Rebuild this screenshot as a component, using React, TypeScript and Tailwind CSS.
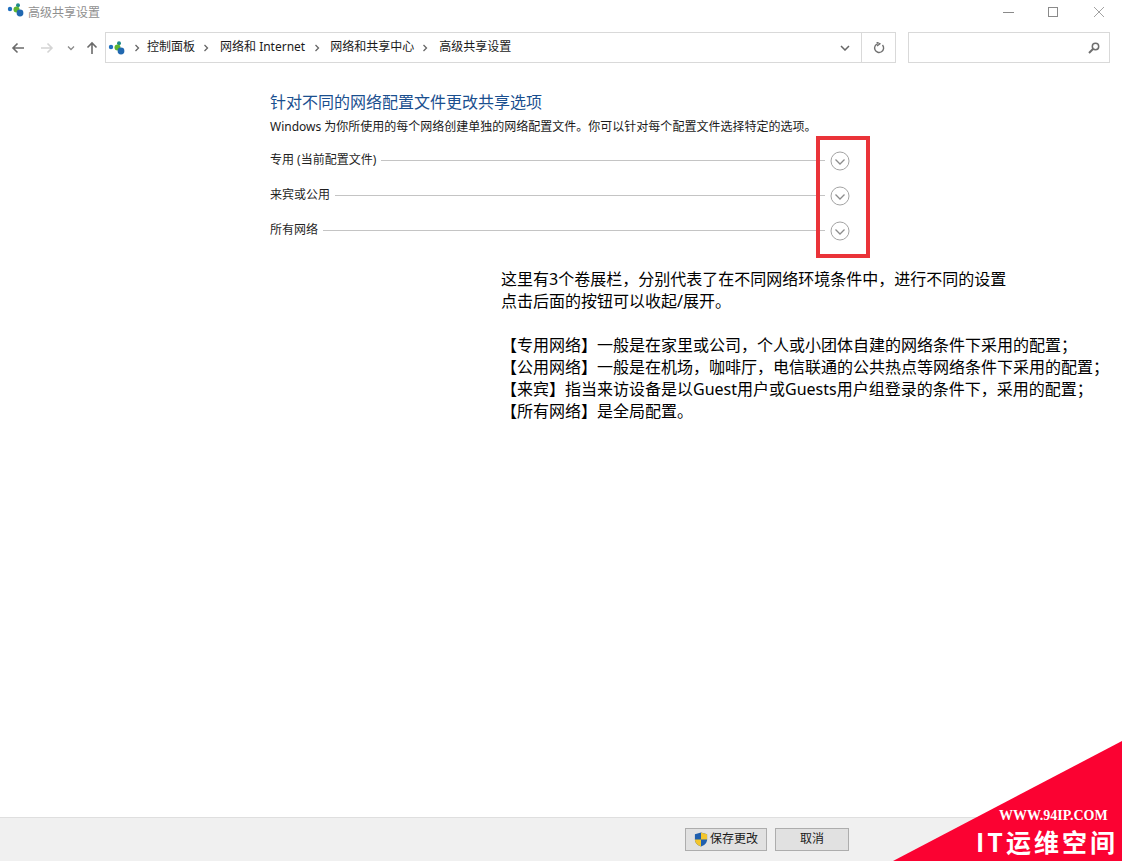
const FONT = "font-['Noto_Sans','Noto_Sans_CJK_SC',sans-serif]";

function NetworkIcon({ className }: { className: string }) {
    return (
        <svg viewBox="0 0 17 14" className={className}>
            <circle cx="3" cy="6" r="2.2" fill="#1f6fc0" />
            <circle cx="11" cy="2.2" r="2" fill="#1f8a8a" />
            <circle cx="9.5" cy="6.5" r="3" fill="#5cb531" />
            <circle cx="13" cy="10" r="3.4" fill="#2168b0" />
        </svg>
    );
}

function Crumb({ children }: { children: React.ReactNode }) {
    return <span className="block -translate-y-px whitespace-nowrap text-[12px] text-[#1a1a1a]">{children}</span>;
}

function Sep() {
    return (
        <svg viewBox="0 0 6 8" className="h-2 w-1.5 shrink-0">
            <path d="M1.5 1 L4.5 4 L1.5 7" fill="none" stroke="#666" strokeWidth="1.3" />
        </svg>
    );
}

function CircleChevron() {
    return (
        <svg viewBox="0 0 20 20" className="h-5 w-5 shrink-0">
            <circle cx="10" cy="10" r="9" fill="#fff" stroke="#a3a3a3" strokeWidth="1" />
            <path d="M5.5 8.5 L10 13 L14.5 8.5" fill="none" stroke="#8c8c8c" strokeWidth="1.3" />
        </svg>
    );
}

function Group({ label }: { label: string }) {
    return (
        <div className="flex h-[35px] items-center">
            <span className="block -translate-y-px whitespace-nowrap text-[12px] text-[#1f1f1f]">{label}</span>
            <div className="ml-[5px] h-px flex-1 bg-[#c4c4c4]" />
            <div className="ml-[5px]">
                <CircleChevron />
            </div>
        </div>
    );
}

const notes = [
    "这里有3个卷展栏，分别代表了在不同网络环境条件中，进行不同的设置",
    "点击后面的按钮可以收起/展开。",
    "",
    "【专用网络】一般是在家里或公司，个人或小团体自建的网络条件下采用的配置；",
    "【公用网络】一般是在机场，咖啡厅，电信联通的公共热点等网络条件下采用的配置；",
    "【来宾】指当来访设备是以Guest用户或Guests用户组登录的条件下，采用的配置；",
    "【所有网络】是全局配置。",
];

export default function App() {
    return (
        <div className={`relative flex h-[861px] w-[1122px] flex-col overflow-hidden bg-white ${FONT}`}>
            {/* title bar */}
            <div className="flex h-[24px] items-center pl-[7px]">
                <NetworkIcon className="h-[14px] w-[17px] -translate-y-[2px]" />
                <span className="ml-[4px] block translate-y-px text-[12px] text-[#8f8f8f]">高级共享设置</span>
                <div className="ml-auto flex items-center pr-[18px]">
                    <div className="h-px w-[11px] bg-[#8a8a8a]" />
                    <div className="ml-[34px] h-[10px] w-[10px] border border-[#8a8a8a]" />
                    <svg viewBox="0 0 10 10" className="ml-[36px] h-[10px] w-[10px]">
                        <path d="M0 0 L10 10 M10 0 L0 10" stroke="#8a8a8a" strokeWidth="0.8" />
                    </svg>
                </div>
            </div>

            {/* nav bar */}
            <div className="mt-[8px] flex h-[31px] items-center pl-[11px] pr-[12px]">
                <svg viewBox="0 0 14 12" className="h-[12px] w-[14px]">
                    <path d="M13 6 H2 M6.5 1.5 L2 6 L6.5 10.5" fill="none" stroke="#6b6b6b" strokeWidth="1.6" />
                </svg>
                <svg viewBox="0 0 14 12" className="ml-[15px] h-[12px] w-[14px]">
                    <path d="M1 6 H12 M7.5 1.5 L12 6 L7.5 10.5" fill="none" stroke="#d4d4d4" strokeWidth="1.6" />
                </svg>
                <svg viewBox="0 0 8 6" className="ml-[13px] h-[6px] w-[8px]">
                    <path d="M1 1.5 L4 4.5 L7 1.5" fill="none" stroke="#8a8a8a" strokeWidth="1.3" />
                </svg>
                <svg viewBox="0 0 12 14" className="ml-[11px] h-[14px] w-[12px]">
                    <path d="M6 13 V2 M1.5 6.5 L6 2 L10.5 6.5" fill="none" stroke="#6b6b6b" strokeWidth="1.6" />
                </svg>
                <div className="ml-[7px] flex h-[31px] w-[791px] shrink-0 items-center border border-[#d9d9d9] pl-[2px]">
                    <NetworkIcon className="h-[14px] w-[17px]" />
                    <div className="ml-[9px]"><Sep /></div>
                    <div className="ml-[7px]"><Crumb>控制面板</Crumb></div>
                    <div className="ml-[8px]"><Sep /></div>
                    <div className="ml-[11px]"><Crumb>网络和 Internet</Crumb></div>
                    <div className="ml-[9px]"><Sep /></div>
                    <div className="ml-[10px]"><Crumb>网络和共享中心</Crumb></div>
                    <div className="ml-[8px]"><Sep /></div>
                    <div className="ml-[11px]"><Crumb>高级共享设置</Crumb></div>
                    <svg viewBox="0 0 10 6" className="ml-auto mr-[11px] h-[6px] w-[10px]">
                        <path d="M1 1 L5 5 L9 1" fill="none" stroke="#666" strokeWidth="1.5" />
                    </svg>
                    <div className="flex h-full w-[34px] items-center justify-center border-l border-[#d9d9d9]">
                        <svg viewBox="0 0 12 12" className="h-[12px] w-[12px]">
                            <path d="M9.5 3 A4.5 4.5 0 1 1 5 1.6" fill="none" stroke="#707070" strokeWidth="1.4" />
                            <path d="M3.5 0 L7 1.8 L4 4" fill="none" stroke="#707070" strokeWidth="1.2" />
                        </svg>
                    </div>
                </div>
                <div className="ml-[12px] flex h-[31px] flex-1 items-center justify-end border border-[#d9d9d9] pr-[9px]">
                    <svg viewBox="0 0 12 12" className="h-[12px] w-[12px]">
                        <circle cx="7.5" cy="4.5" r="3.2" fill="none" stroke="#6e6e6e" strokeWidth="1.5" />
                        <path d="M5 7 L1 11" stroke="#6e6e6e" strokeWidth="2" />
                    </svg>
                </div>
            </div>

            {/* content */}
            <div className="flex-1 pl-[270px]">
                <h1 className="mt-[28px] text-[16px] leading-[22px] font-normal text-[#1a4f8f]">针对不同的网络配置文件更改共享选项</h1>
                <p className="mt-[5px] text-[12px] leading-[18px] whitespace-nowrap text-[#1a1a1a]">Windows 为你所使用的每个网络创建单独的网络配置文件。你可以针对每个配置文件选择特定的选项。</p>
                <div className="mt-[7px] w-[580px]">
                    <Group label="专用 (当前配置文件)" />
                    <Group label="来宾或公用" />
                    <Group label="所有网络" />
                </div>
                <div className="mt-[20px] ml-[231px] text-[16px] leading-[22px] text-black">
                    {notes.map((line, i) => (
                        <div key={i} className="h-[22px] whitespace-nowrap">{line}</div>
                    ))}
                </div>
            </div>

            {/* footer */}
            <div className="flex h-[44px] items-center border-t border-[#dfdfdf] bg-[#f0f0f0] pb-[1px] pl-[685px]">
                <button className="flex h-[23px] w-[82px] items-center justify-center border border-[#adadad] bg-[#e1e1e1] text-[12px] text-[#1a1a1a]">
                    <svg viewBox="0 0 14 16" className="mr-[2px] h-[15px] w-[14px]">
                        <path d="M7 0.5 L13.5 2.5 V8 C13.5 12 10 14.5 7 15.5 C4 14.5 0.5 12 0.5 8 V2.5 Z" fill="#1f5fae" />
                        <path d="M7 0.5 L13.5 2.5 V8 H7 Z" fill="#f3c52c" />
                        <path d="M7 8 H0.5 C0.5 12 4 14.5 7 15.5 Z" fill="#f3c52c" />
                    </svg>
                    保存更改
                </button>
                <button className="ml-[8px] h-[23px] w-[74px] border border-[#adadad] bg-[#e1e1e1] text-[12px] text-[#1a1a1a]">取消</button>
            </div>

            {/* annotation box */}
            <div className="absolute left-[816px] top-[136px] h-[122px] w-[54px] border-[4px] border-[#ea3339]" />

            {/* watermark */}
            <svg viewBox="0 0 229 120" className="absolute bottom-0 right-0 h-[120px] w-[229px]">
                <polygon points="229,0 229,120 0,120" fill="#fb0232" />
            </svg>
            <div className="absolute left-[999px] top-[808px] font-['Liberation_Serif',serif] text-[14px] leading-[16px] font-bold whitespace-nowrap text-white">WWW.94IP.COM</div>
            <div className="absolute left-[976px] top-[824px] font-['Noto_Sans_CJK_SC',sans-serif] text-[25px] leading-[34px] font-bold tracking-[3px] whitespace-nowrap text-white">IT运维空间</div>
        </div>
    );
}
